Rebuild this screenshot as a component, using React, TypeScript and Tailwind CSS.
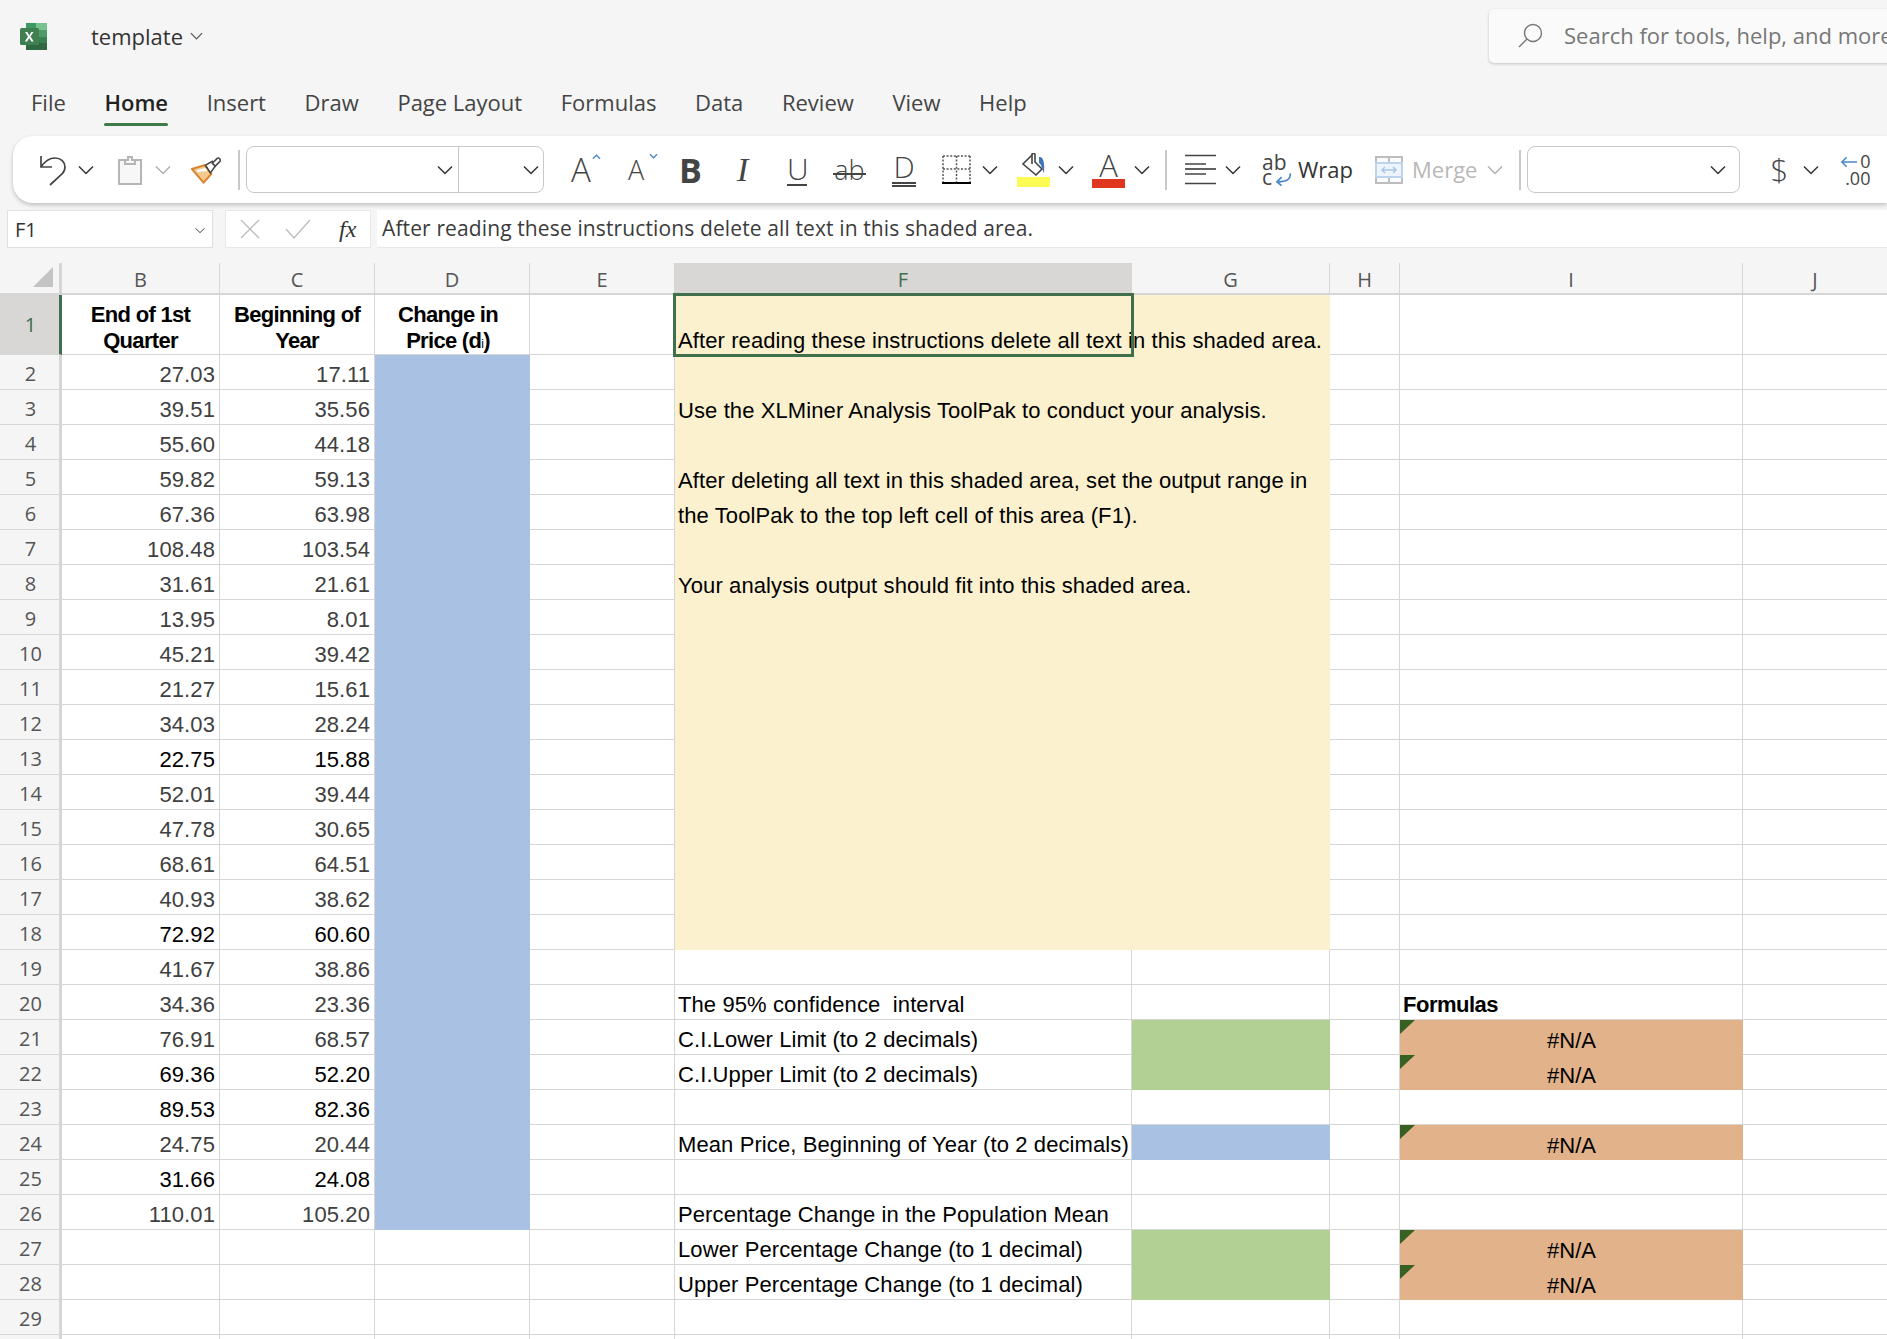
import React from 'react'

const ui = "font-['Open_Sans',sans-serif]"
const sheet = "font-['Liberation_Sans',Arial,sans-serif]"

const tabs = ['File', 'Home', 'Insert', 'Draw', 'Page Layout', 'Formulas', 'Data', 'Review', 'View', 'Help']
const columns = ['B', 'C', 'D', 'E', 'F', 'G', 'H', 'I', 'J']
const colWidths = ['w-[158px]', 'w-[155px]', 'w-[155px]', 'w-[145px]', 'w-[457px]', 'w-[198px]', 'w-[70px]', 'w-[343px]', 'w-[145px]']

// [end of quarter, beginning of year, darker text]
const prices: [string, string, boolean?][] = [
  ['27.03', '17.11'], ['39.51', '35.56'], ['55.60', '44.18'], ['59.82', '59.13'], ['67.36', '63.98'],
  ['108.48', '103.54'], ['31.61', '21.61'], ['13.95', '8.01'], ['45.21', '39.42'], ['21.27', '15.61'],
  ['34.03', '28.24'], ['22.75', '15.88', true], ['52.01', '39.44'], ['47.78', '30.65'], ['68.61', '64.51'],
  ['40.93', '38.62'], ['72.92', '60.60', true], ['41.67', '38.86'], ['34.36', '23.36'], ['76.91', '68.57'],
  ['69.36', '52.20', true], ['89.53', '82.36', true], ['24.75', '20.44'], ['31.66', '24.08', true], ['110.01', '105.20'],
]

const notes: Record<number, string> = {
  1: 'After reading these instructions delete all text in this shaded area.',
  3: 'Use the XLMiner Analysis ToolPak to conduct your analysis.',
  5: 'After deleting all text in this shaded area, set the output range in',
  6: 'the ToolPak to the top left cell of this area (F1).',
  8: 'Your analysis output should fit into this shaded area.',
  20: 'The 95% confidence  interval',
  21: 'C.I.Lower Limit (to 2 decimals)',
  22: 'C.I.Upper Limit (to 2 decimals)',
  24: 'Mean Price, Beginning of Year (to 2 decimals)',
  26: 'Percentage Change in the Population Mean',
  27: 'Lower Percentage Change (to 1 decimal)',
  28: 'Upper Percentage Change (to 1 decimal)',
}

const Chevron = ({ className = 'ml-[12px]', size = 'w-[16px] h-[10px]', color = '#333' }: { className?: string; size?: string; color?: string }) => (
  <svg viewBox="0 0 16 10" className={`${size} shrink-0 ${className}`} fill="none" stroke={color} strokeWidth="1.5">
    <path d="M1 1.500 8 8.500 15 1.500" />
  </svg>
)

const Sep = ({ className }: { className: string }) => <div className={`w-[2px] h-[40px] bg-[#c8c8c8] shrink-0 ${className}`} />

const ExcelLogo = () => (
  <svg viewBox="0 0 28 27" className="w-[28px] h-[27px]">
    <rect x="6" y="0" width="21" height="27" rx="1.500" fill="#217346" />
    <rect x="16" y="0" width="11" height="7" fill="#78c28f" />
    <rect x="6" y="0" width="10" height="7" fill="#3e9a63" />
    <rect x="16" y="7" width="11" height="7" fill="#4f9a68" />
    <rect x="6" y="7" width="10" height="7" fill="#2f8452" />
    <rect x="16" y="14" width="11" height="6" fill="#3c7f51" />
    <rect x="6" y="14" width="10" height="6" fill="#2a6e44" />
    <rect x="6" y="20" width="21" height="7" fill="#2f6a42" />
    <rect x="0" y="5" width="19" height="17" rx="1.500" fill="#3f7f51" />
    <path d="M5 9h2.300l2 3.400 2-3.400h2.200l-3 4.600 3.200 5h-2.400l-2.100-3.500-2.100 3.500H4.800l3.200-5z" fill="#fff" />
  </svg>
)

const Toolbar = () => (
  <div className={`ml-[13px] h-[67px] bg-white rounded-l-[20px] shadow-[0_2px_4px_rgba(0,0,0,0.22)] flex items-center ${ui}`}>
    <svg viewBox="0 0 28 32" className="ml-[26px] w-[28px] h-[32px] shrink-0" fill="none" stroke="#444" strokeWidth="1.7">
      <path d="M2 2v11h11" />
      <path d="M2 13C6 7 11 4 16 4c6 0 10 4 10 9 0 3-1 5-3 7L11 31" />
    </svg>
    <Chevron className="ml-[11px]" />
    <svg viewBox="0 0 24 30" className="ml-[24px] w-[24px] h-[30px] shrink-0" fill="#f7f7f7" stroke="#b5b5b5" strokeWidth="2">
      <path d="M1 5h22v24H1z" />
      <path d="M7 9V5h3V2h4v3h3v4z" />
    </svg>
    <Chevron className="ml-[13px]" color="#b0b0b0" />
    <svg viewBox="0 0 32 28" className="ml-[20px] w-[31px] h-[28px] shrink-0">
      <path d="M1 13 14 9l7 9-8 9z" fill="#f4c98e" stroke="#d9822b" strokeWidth="2" />
      <path d="M6 14l9-2 2 3-11 1z" fill="#fff" />
      <path d="M15 9l7-4 3 5-5 7z" fill="#fff" stroke="#444" strokeWidth="1.600" />
      <path d="M22 7l5-5c2-1 4 1 3 3l-5 5z" fill="#fff" stroke="#444" strokeWidth="1.600" />
    </svg>
    <Sep className="ml-[16px]" />
    <div className="ml-[6px] w-[298px] h-[47px] border border-[#c8c8c8] rounded-[8px] flex items-center shrink-0">
      <div className="w-[212px] h-full border-r border-[#c8c8c8] flex items-center justify-end pr-[5px]">
        <Chevron className="ml-0" />
      </div>
      <div className="flex-1 flex items-center justify-end pr-[4px]">
        <Chevron className="ml-0" />
      </div>
    </div>
    <div className="ml-[27px] w-[30px] shrink-0 relative text-[33px] leading-none text-[#444] font-light">
      A
      <svg viewBox="0 0 10 6" className="absolute right-0 top-[1px] w-[9px] h-[6px]" fill="none" stroke="#4a86c5" strokeWidth="1.400"><path d="M1 5l4-4 4 4" /></svg>
    </div>
    <div className="ml-[27px] w-[30px] shrink-0 relative text-[27px] leading-none text-[#444] font-light">
      A
      <svg viewBox="0 0 10 6" className="absolute right-0 -top-[3px] w-[9px] h-[6px]" fill="none" stroke="#4a86c5" strokeWidth="1.400"><path d="M1 1l4 4 4-4" /></svg>
    </div>
    <div className="ml-[21px] w-[20px] shrink-0 text-[34px] leading-none font-bold text-[#444]">B</div>
    <div className="ml-[38px] w-[16px] shrink-0 text-[34px] leading-none italic text-[#444] font-['Liberation_Serif',serif]">I</div>
    <div className="ml-[34px] w-[20px] shrink-0 text-[30px] leading-none border-b-2 border-[#444] text-[#444] font-light text-center">U</div>
    <div className="ml-[26px] w-[33px] shrink-0 relative text-[27px] leading-none text-[#444] font-light text-center">
      ab
      <div className="absolute left-0 right-0 top-[17px] h-[2px] bg-[#444]" />
    </div>
    <div className="ml-[26px] w-[24px] shrink-0 text-[30px] leading-none border-b-[5px] border-double border-[#444] text-[#444] font-light text-center">D</div>
    <svg viewBox="0 0 29 29" className="ml-[26px] w-[29px] h-[29px] shrink-0" fill="none" stroke="#555" strokeWidth="1.500" strokeDasharray="2 1.600">
      <path d="M1 1h27M1 14h27M1 1v27M28 1v27M14.500 1v27" />
      <path d="M0 28h29" stroke="#000" strokeWidth="2" strokeDasharray="none" />
    </svg>
    <Chevron className="ml-[11px]" />
    <div className="ml-[19px] w-[33px] shrink-0 flex flex-col items-center">
      <svg viewBox="0 0 28 24" className="w-[28px] h-[24px]" fill="none" stroke="#444" strokeWidth="1.600">
        <path d="M12 1c1-1 3-1 3 1v7l7 7-6 6-13-11 9-9z" />
        <path d="M12 2v9" />
        <path d="M19 4c4-1 6 5 5 16-2-4-2-8-5-10z" fill="#3f73bd" stroke="none" />
      </svg>
      <div className="w-[33px] h-[10px] bg-[#fdfc54]" />
    </div>
    <Chevron className="ml-[8px]" />
    <div className="ml-[18px] w-[33px] shrink-0 flex flex-col items-center">
      <div className="text-[31px] h-[28px] leading-[28px] text-[#444] font-light">A</div>
      <div className="w-[33px] h-[9px] bg-[#e0361f]" />
    </div>
    <Chevron className="ml-[9px]" />
    <Sep className="ml-[15px]" />
    <svg viewBox="0 0 31 31" className="ml-[18px] w-[31px] h-[31px] shrink-0" stroke="#444" strokeWidth="1.700">
      <path d="M0 1.500h31M0 10h21M0 20h21M0 29.500h31" />
      <path d="M0 15h31" />
    </svg>
    <Chevron className="ml-[9px]" />
    <div className="ml-[21px] w-[30px] shrink-0 relative text-[21px] text-[#444] flex flex-col">
      <span className="leading-[15px]">ab</span>
      <span className="leading-[15px]">c</span>
      <svg viewBox="0 0 18 14" className="absolute right-0 -bottom-[1px] w-[17px] h-[14px]" fill="none" stroke="#4a86c5" strokeWidth="1.700">
        <path d="M16 1c1 6-3 9-13 9M7 5l-5 5 5 4" />
      </svg>
    </div>
    <span className="ml-[6px] text-[22px] text-[#333]">Wrap</span>
    <svg viewBox="0 0 28 28" className="ml-[22px] w-[28px] h-[28px] shrink-0" fill="#f9fbfe" stroke="#bdbdbd" strokeWidth="2">
      <path d="M1 1h26v26H1zM1 7h26M1 21h26M14 1v6M14 21v6" />
      <path d="M1 7h26v14H1z" stroke="#bdd3ee" fill="#eef4fb" />
      <path d="M7 14h14M10 11l-3 3 3 3M18 11l3 3-3 3" stroke="#a9c6e8" fill="none" strokeWidth="1.500" />
    </svg>
    <span className="ml-[9px] text-[22px] text-[#b8b8b8]">Merge</span>
    <Chevron className="ml-[10px]" color="#b0b0b0" />
    <Sep className="ml-[16px]" />
    <div className="ml-[6px] w-[213px] h-[47px] border border-[#c8c8c8] rounded-[8px] flex items-center justify-end pr-[13px] shrink-0">
      <Chevron className="ml-0" />
    </div>
    <span className="ml-[30px] w-[14px] text-[31px] leading-none text-[#444] font-light shrink-0">$</span>
    <Chevron className="ml-[19px]" />
    <div className="ml-[21px] w-[30px] shrink-0 relative text-[18px] text-[#444] flex flex-col items-end">
      <span className="leading-[17px]">0</span>
      <span className="leading-[17px]">.00</span>
      <svg viewBox="0 0 18 12" className="absolute left-0 top-[3px] w-[17px] h-[12px]" fill="none" stroke="#4a86c5" strokeWidth="1.600">
        <path d="M18 6H2M7 1 2 6l5 5" />
      </svg>
    </div>
  </div>
)

const FormulaBar = () => (
  <div className={`mt-[7px] h-[38px] flex ${ui}`}>
    <div className="ml-[7px] w-[206px] bg-white border border-[#e0e0e0] flex items-center justify-between px-[7px]">
      <span className="text-[20px] text-[#333] pt-[1px]">F1</span>
      <Chevron className="ml-0 mt-[2px]" size="w-[10px] h-[7px]" />
    </div>
    <div className="ml-[12px] w-[146px] bg-white border border-[#e8e8e8] flex items-center">
      <svg viewBox="0 0 20 20" className="ml-[14px] w-[20px] h-[20px]" fill="none" stroke="#bdbdbd" strokeWidth="1.400"><path d="M1 1l18 18M19 1 1 19" /></svg>
      <svg viewBox="0 0 26 20" className="ml-[25px] w-[26px] h-[20px]" fill="none" stroke="#bdbdbd" strokeWidth="1.400"><path d="M1 10l8 9L25 1" /></svg>
      <span className="ml-[28px] text-[24px] leading-none italic text-[#333] font-['Liberation_Serif',serif]">fx</span>
    </div>
    <div className="ml-[6px] flex-1 bg-white border-b border-[#e8e8e8] flex items-center pl-[5px]">
      <span className="text-[21px] tracking-[0.12px] text-[#3b3b3b] whitespace-nowrap">{notes[1]}</span>
    </div>
  </div>
)

const ColumnHeader = () => (
  <div className={`mt-[15px] h-[32px] flex border-b-2 border-[#d6d6d6] ${ui}`}>
    <div className="w-[62px] shrink-0 relative border-r-[3px] border-[#d6d6d6]">
      <svg viewBox="0 0 20 20" className="absolute right-[6px] top-[4px] w-[20px] h-[20px]"><path d="M20 0v20H0z" fill="#c4c4c4" /></svg>
    </div>
    {columns.map((c, i) => (
      <div
        key={c}
        className={`${colWidths[i]} shrink-0 border-r border-[#d6d6d6] text-center text-[20px] leading-[34px] ${c === 'F' ? 'bg-[#d8d7d5] text-[#3f6f4b]' : 'text-[#555]'}`}
      >
        {c}
      </div>
    ))}
  </div>
)

const Comment = () => (
  <svg viewBox="0 0 15 14" className="absolute left-0 top-0 w-[15px] h-[14px]"><path d="M0 0h15L0 14z" fill="#376023" /></svg>
)

const fillFor = (col: string, r: number) => {
  if (col === 'D' && r >= 2 && r <= 26) return 'bg-[#a9c1e2]'
  if ((col === 'F' || col === 'G') && r <= 18) return 'bg-[#fbf1cf]'
  if (col === 'G' && (r === 21 || r === 22 || r === 27 || r === 28)) return 'bg-[#b2cf94]'
  if (col === 'G' && r === 24) return 'bg-[#a9c1e2]'
  if (col === 'I' && (r === 21 || r === 22 || r === 24 || r === 27 || r === 28)) return 'bg-[#e2b28b]'
  return ''
}

const headers: Record<string, string[]> = {
  B: ['End of 1st', 'Quarter'],
  C: ['Beginning of', 'Year'],
}

const Cell = ({ col, r, width }: { col: string; r: number; width: string }) => {
  const fill = fillFor(col, r)
  const price = prices[r - 2]
  const base = `${width} shrink-0 relative whitespace-pre ${fill || 'bg-white border-r border-b border-[#d6d6d6]'}`

  if (r === 1 && (col === 'B' || col === 'C' || col === 'D')) {
    return (
      <div className={`${base} text-center font-bold text-black text-[22px] leading-[26px] pt-[7px] tracking-[-0.7px]`}>
        {col === 'D' ? (
          <>
            <div className="pr-[8px]">Change in</div>
            <div className="pr-[8px]">Price (d<span className="text-[12px] font-normal">i</span>)</div>
          </>
        ) : (
          headers[col].map((t) => <div key={t}>{t}</div>)
        )}
      </div>
    )
  }

  if ((col === 'B' || col === 'C') && price) {
    return (
      <div className={`${base} flex items-end justify-end pr-[4px] text-[22px] tracking-[0.1px] leading-[28px] ${price[2] ? 'text-black' : 'text-[#404040]'}`}>
        {col === 'B' ? price[0] : price[1]}
      </div>
    )
  }

  if (col === 'F' && notes[r]) {
    return (
      <div className={`${base} flex items-end pl-[3px] text-[22px] tracking-[0.1px] leading-[28px] text-black`}>
        <span className="relative z-10">{notes[r]}</span>
        {r === 1 && <div className="absolute z-20 -left-[2px] -top-[2px] -right-[2px] -bottom-[2px] border-[3px] border-[#3f6f4b]" />}
      </div>
    )
  }

  if (col === 'I') {
    if (r === 20) {
      return <div className={`${base} flex items-end pl-[3px] text-[22px] leading-[28px] font-bold text-black tracking-[-0.5px]`}>Formulas</div>
    }
    if (fill) {
      return (
        <div className={`${base} flex items-end justify-center text-[22px] leading-[28px] text-black`}>
          <Comment />
          #N/A
        </div>
      )
    }
  }

  return <div className={base} />
}

const Row = ({ r }: { r: number }) => (
  <div className={`flex ${r === 1 ? 'h-[60px]' : 'h-[35px]'}`}>
    <div className={`w-[62px] shrink-0 relative border-b border-[#d6d6d6] border-r-[3px] pl-[2px] text-center text-[20px] ${ui} ${r === 1 ? 'bg-[#d8d7d5] text-[#3f6f4b] leading-[60px] border-r-[#3f6f4b]' : 'text-[#555] leading-[37px] border-r-[#d6d6d6]'}`}>
      {r < 30 && r}
    </div>
    <div className={`flex ${sheet}`}>
      {columns.map((c, i) => (
        <Cell key={c} col={c} r={r} width={colWidths[i]} />
      ))}
    </div>
  </div>
)

const rows = Array.from({ length: 30 }, (_, i) => i + 1)

export default function App() {
  return (
    <div className="w-[1887px] h-[1339px] overflow-hidden bg-[#f5f5f5]">
      <div className={`h-[72px] flex ${ui}`}>
        <div className="w-[1489px] shrink-0 flex">
          <div className="ml-[20px] mt-[23px]"><ExcelLogo /></div>
          <div className="ml-[43px] mt-[20px] h-[32px] flex items-center">
            <span className="text-[22px] text-[#333]">template</span>
            <Chevron className="ml-[7px]" size="w-[13px] h-[8px]" color="#555" />
          </div>
        </div>
        <div className="mt-[9px] w-[500px] h-[54px] shrink-0 bg-[#fafafa] rounded-[5px] shadow-[0_1px_3px_rgba(0,0,0,0.2)] flex items-center pb-[2px]">
          <svg viewBox="0 0 25 25" className="ml-[29px] w-[25px] h-[25px]" fill="none" stroke="#777" strokeWidth="1.400">
            <circle cx="15" cy="10" r="8.500" />
            <path d="M9 16 1 24" />
          </svg>
          <span className="ml-[21px] text-[22px] text-[#777] whitespace-nowrap">Search for tools, help, and more</span>
        </div>
      </div>
      <div className={`h-[64px] flex pl-[31px] gap-[38.600px] ${ui}`}>
        {tabs.map((t) => (
          <div key={t} className={`h-[52px] flex items-end pb-[8px] text-[22px] leading-[28px] relative ${t === 'Home' ? 'font-semibold text-[#222]' : 'text-[#444]'}`}>
            {t}
            {t === 'Home' && <div className="absolute left-0 right-0 bottom-[-2px] h-[3px] rounded bg-[#3f7a4a]" />}
          </div>
        ))}
      </div>
      <Toolbar />
      <FormulaBar />
      <ColumnHeader />
      {rows.map((r) => (
        <Row key={r} r={r} />
      ))}
    </div>
  )
}
